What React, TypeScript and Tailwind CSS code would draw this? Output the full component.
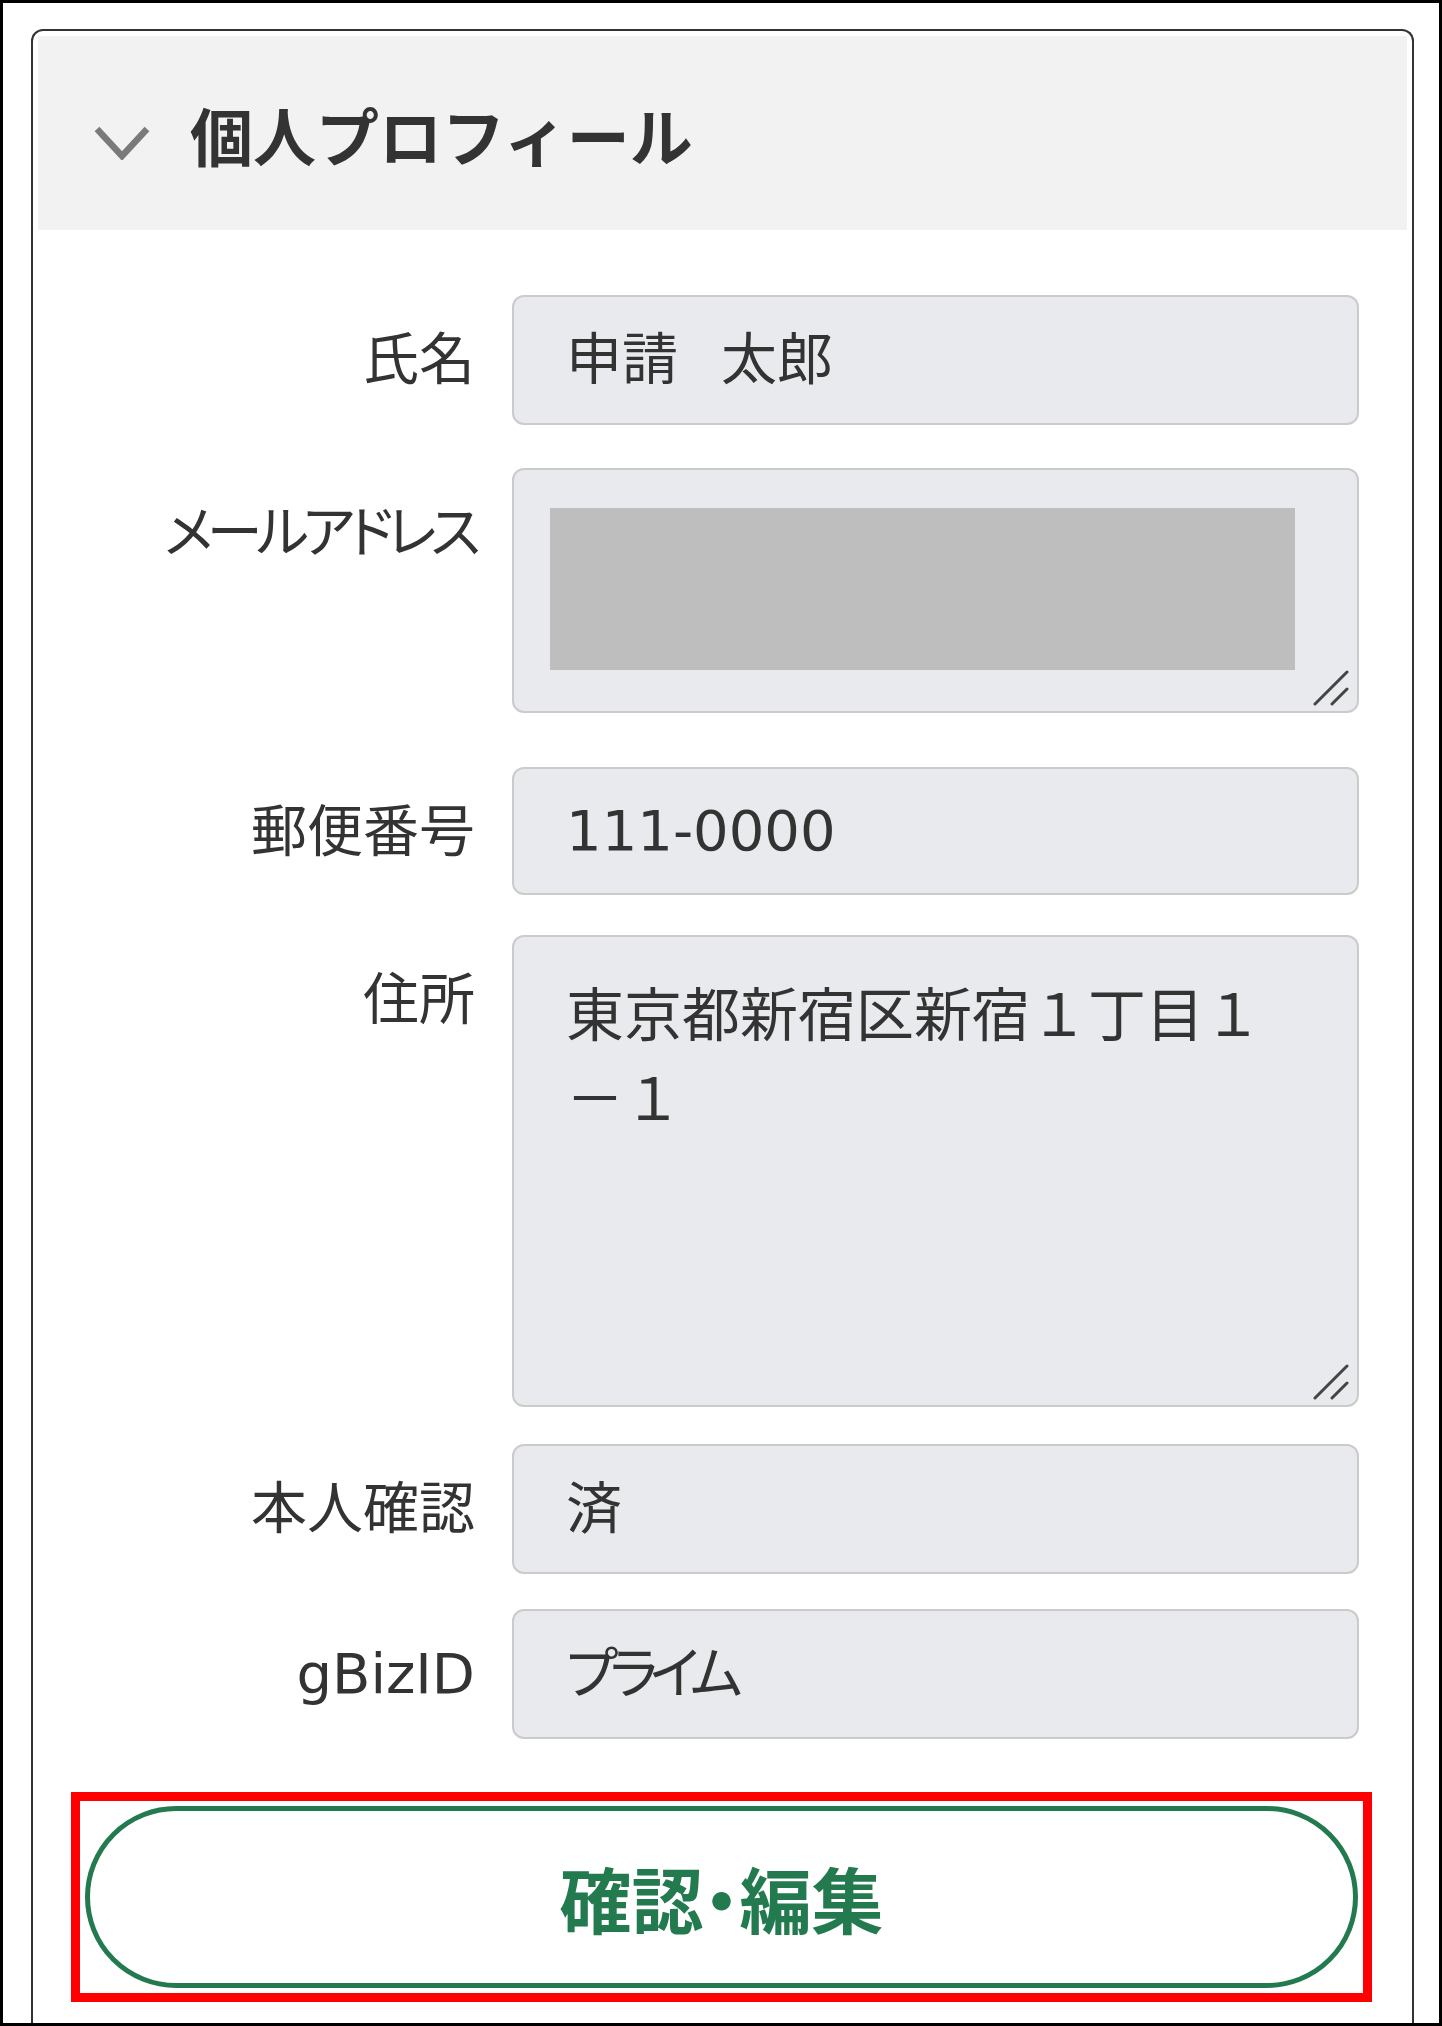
import type { ReactNode } from "react";

const body = "font-['DejaVu_Sans','Noto_Sans_CJK_JP',sans-serif]";

function ResizeHandle() {
  return (
    <svg
      className="absolute right-[8px] bottom-[5px]"
      width="36"
      height="36"
      viewBox="0 0 36 36"
    >
      <line x1="2" y1="34" x2="34" y2="2" stroke="#444" strokeWidth="3" strokeLinecap="round" />
      <line x1="19" y1="34" x2="34" y2="19" stroke="#444" strokeWidth="3" strokeLinecap="round" />
    </svg>
  );
}

interface FieldRowProps {
  label: ReactNode;
  height: string;
  className?: string;
  children: ReactNode;
}

function FieldRow({ label, height, className = "", children }: FieldRowProps) {
  return (
    <div className={`flex ${className}`}>
      <div className="w-[437px] h-[130px] shrink-0 flex items-center justify-end text-[56px] text-[#333]">
        {label}
      </div>
      <div
        className={`relative ml-[37px] w-[847px] ${height} rounded-[12px] border-2 border-[#cbcbcb] bg-[#e9eaed] text-[56px] text-[#333]`}
      >
        {children}
      </div>
    </div>
  );
}

function SingleValue({ children }: { children: ReactNode }) {
  return <div className="h-full flex items-center pl-[52px]">{children}</div>;
}

export default function App() {
  return (
    <div
      className={`w-[1442px] h-[2026px] border-[3px] border-black bg-white overflow-hidden flex flex-col pl-[28px] pt-[26px] ${body}`}
    >
      <div className="w-[1383px] flex-1 border-2 border-b-0 border-[#333] rounded-t-[12px] px-[5px] pt-[5px]">
        <div className="h-[194px] bg-[#f2f2f2] flex items-center">
          <svg
            className="ml-[56px] mt-[20px]"
            width="56"
            height="34"
            viewBox="0 0 56 34"
          >
            <polyline
              points="3,3 28,30 53,3"
              fill="none"
              stroke="#7a7a7a"
              strokeWidth="6.5"
            />
          </svg>
          <h2 className="ml-[40px] text-[63px] font-bold text-[#333] font-['Noto_Sans_CJK_JP',sans-serif] leading-none">
            個人プロフィール
          </h2>
        </div>

        <div className="pt-[65px]">
          <FieldRow label="氏名" height="h-[130px]">
            <SingleValue>
              申請<span className="ml-[43px]">太郎</span>
            </SingleValue>
          </FieldRow>

          <FieldRow
            label={<span className="tracking-[-6px] [font-feature-settings:'palt']">メールアドレス</span>}
            height="h-[245px]"
            className="mt-[43px]"
          >
            <div className="pl-[36px] pt-[38px]">
              <div className="w-[745px] h-[162px] bg-[#bebebe]" />
            </div>
            <ResizeHandle />
          </FieldRow>

          <FieldRow label="郵便番号" height="h-[128px]" className="mt-[54px]">
            <SingleValue>111-0000</SingleValue>
          </FieldRow>

          <FieldRow label="住所" height="h-[472px]" className="mt-[38px]">
            <div className="pl-[52px] pt-[32px] text-[58px] leading-[84px] font-['Noto_Sans_CJK_JP',sans-serif]">
              <div>東京都新宿区新宿１丁目１</div>
              <div>－１</div>
            </div>
            <ResizeHandle />
          </FieldRow>

          <FieldRow label="本人確認" height="h-[130px]" className="mt-[37px]">
            <SingleValue>済</SingleValue>
          </FieldRow>

          <FieldRow label="gBizID" height="h-[130px]" className="mt-[35px]">
            <SingleValue>
              <span className="tracking-[-8px] [font-feature-settings:'palt']">プライム</span>
            </SingleValue>
          </FieldRow>
        </div>

        <div className="ml-[33px] mt-[53px] w-[1301px] h-[210px] border-[9px] border-[#ff0000] p-[5px]">
          <button className="w-full h-full rounded-full border-[5px] border-[#237a4f] bg-white flex items-center justify-center text-[72px] font-bold text-[#237a4f] font-['Noto_Sans_CJK_JP',sans-serif] [font-feature-settings:'palt']">
            確認・編集
          </button>
        </div>
      </div>
    </div>
  );
}
